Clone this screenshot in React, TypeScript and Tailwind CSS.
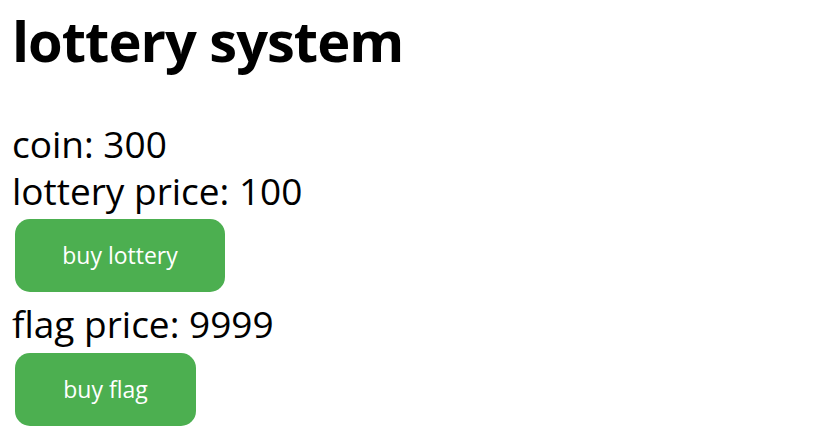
import React from "react";

const App: React.FC = () => {
  return (
    <div className="min-h-screen bg-white text-black px-3 pt-[5px] font-['Open_Sans',sans-serif]">
      <h1 className="text-[56px] font-bold leading-[70px] tracking-[-1px]">lottery system</h1>

      <div className="mt-[45px] flex flex-col items-start">
        <p className="text-[37px] leading-[47px]">coin: 300</p>
        <p className="text-[37px] leading-[47px]">lottery price: 100</p>
        <button className="ml-[3px] mt-[5px] h-[73px] w-[210px] rounded-[15px] bg-[#4caf50] text-[23px] text-white">
          buy lottery
        </button>
        <p className="mt-[8px] text-[37px] leading-[47px]">flag price: 9999</p>
        <button className="ml-[3px] mt-[6px] h-[73px] w-[181px] rounded-[15px] bg-[#4caf50] text-[23px] text-white">
          buy flag
        </button>
      </div>
    </div>
  );
};

export default App;
